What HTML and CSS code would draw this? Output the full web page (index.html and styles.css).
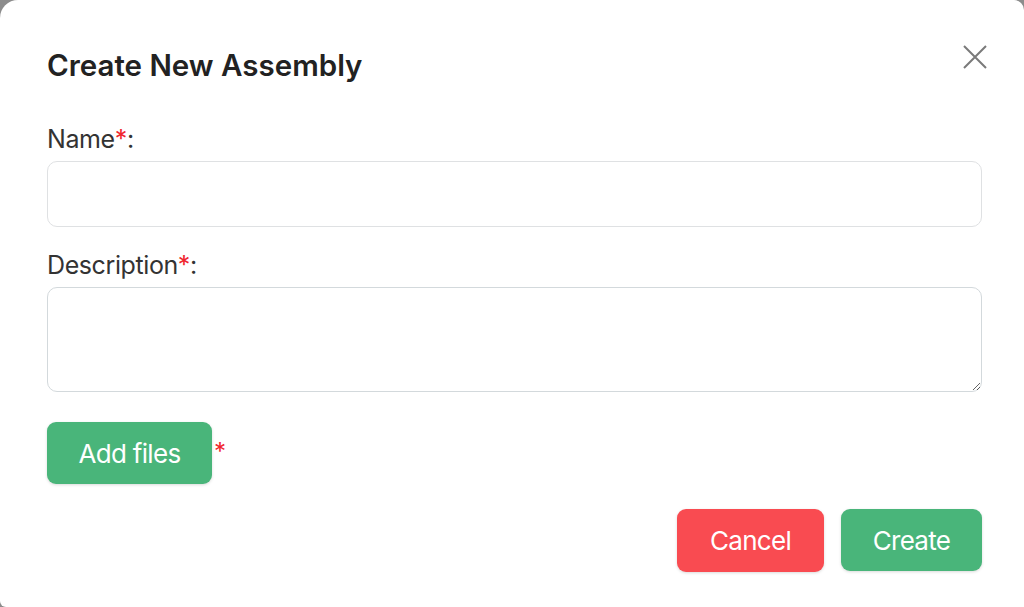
FILE: index.html
```html
<!DOCTYPE html>
<html>
<head>
<meta charset="utf-8">
<link rel="stylesheet" href="styles.css">
</head>
<body>
<div class="modal">
  <div class="header">
    <h1 class="title">Create New Assembly</h1>
    <button class="close" aria-label="Close">
      <svg width="26" height="26" viewBox="0 0 26 26"><path d="M2 2 L24 24 M24 2 L2 24" stroke="#7a7a7a" stroke-width="2" fill="none"/></svg>
    </button>
  </div>
  <label class="label">Name<span class="req">*</span>:</label>
  <input class="input" type="text">
  <label class="label label-desc">Description<span class="req">*</span>:</label>
  <textarea class="textarea"></textarea>
  <div class="files-row">
    <button class="btn btn-green btn-files">Add files</button><span class="req req-files">*</span>
  </div>
  <div class="actions">
    <button class="btn btn-red">Cancel</button>
    <button class="btn btn-green btn-create">Create</button>
  </div>
</div>
</body>
</html>
```
FILE: styles.css
```css
html, body {
  margin: 0;
  padding: 0;
  background: #8c8c8c;
  width: 1024px;
  height: 607px;
  overflow: hidden;
}
.modal {
  box-sizing: border-box;
  width: 1024px;
  height: 607px;
  background: #fff;
  border-radius: 18px 10px 0 6px;
  padding: 45px 42px 0 47px;
  font-family: Inter, "Noto Sans", sans-serif;
  color: #2b2b2b;
  display: flex;
  flex-direction: column;
}
.header {
  display: flex;
  justify-content: space-between;
  align-items: flex-start;
}
.title {
  margin: 0;
  font-size: 29.5px;
  line-height: 40px;
  font-weight: 600;
  color: #222;
  letter-spacing: 0;
}
.close {
  border: none;
  background: none;
  padding: 0;
  margin: -1px -6px 0 0;
  width: 26px;
  height: 26px;
  cursor: pointer;
}
.label {
  display: block;
  margin-top: 39px;
  font-size: 25px;
  line-height: 30px;
  color: #333;
  letter-spacing: -0.4px;
}
.label-desc {
  margin-top: 23px;
}
.req {
  color: #f0262e;
}
.input, .textarea {
  box-sizing: border-box;
  display: block;
  width: 935px;
  border: 1.5px solid #dfe1e3;
  border-radius: 10px;
  background: #fff;
  font-family: inherit;
  font-size: 22px;
  outline: none;
  margin-top: 7px;
}
.input {
  height: 66px;
}
.textarea {
  height: 105px;
  resize: vertical;
  border-color: #d3d9dc;
}
.files-row {
  margin-top: 30px;
  display: flex;
  align-items: center;
}
.btn {
  border: none;
  border-radius: 9px;
  color: #fff;
  font-family: inherit;
  font-size: 26px;
  letter-spacing: -0.7px;
  cursor: pointer;
  box-shadow: 0 1px 3px rgba(0,0,0,0.15);
}
.btn-green {
  background: #49b57a;
}
.btn-red {
  background: #f94b51;
}
.btn-files {
  width: 165px;
  height: 62px;
}
.req-files {
  font-size: 24px;
  margin-left: 2px;
  margin-top: -4px;
}
.actions {
  margin-top: 25px;
  display: flex;
  justify-content: flex-end;
  gap: 17px;
}
.btn-red {
  width: 147px;
  height: 63px;
}
.btn-create {
  width: 141px;
  height: 62px;
}
```
